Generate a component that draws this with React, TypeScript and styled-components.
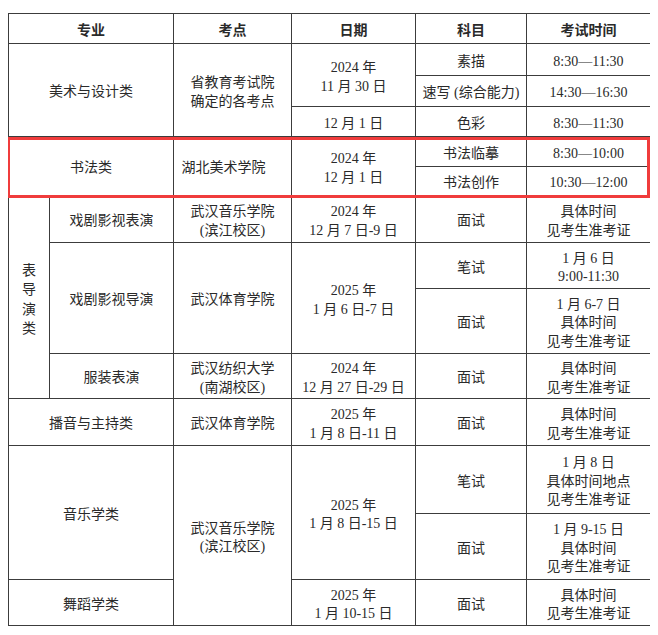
import styled, { createGlobalStyle } from 'styled-components';

const GlobalStyle = createGlobalStyle`
  body {
    margin: 8px;
    background: #ffffff;
    font-family: "Liberation Serif", "Noto Sans CJK SC", serif;
  }
`;

const Page = styled.div`
  padding-top: 5px;
`;

const Grid = styled.div`
  display: grid;
  width: 641px;
  grid-template-columns: 40px 123px 117px 123px 110px 123px;
  grid-template-rows: 29px 31px 30px 29px 29px 28px 46px 45px 64px 44px 46px 67px 65px 45px;
  gap: 1px;
  padding: 1px;
  background: #3c3c3c;
`;

const Cell = styled.div<{ $col: string; $row: string; $head?: boolean; $lean?: number }>`
  grid-column: ${(p) => p.$col};
  grid-row: ${(p) => p.$row};
  display: flex;
  flex-direction: column;
  align-items: center;
  justify-content: center;
  padding: 5px ${(p) => p.$lean ?? 0}px 0 0;
  text-align: center;
  background: #ffffff;
  color: #2a2a2a;
  font-size: 14px;
  line-height: 18.5px;
  font-weight: ${(p) => (p.$head ? 700 : 400)};
  white-space: nowrap;
`;

const Vertical = styled.span`
  width: 1em;
  white-space: normal;
  line-height: 19.5px;
`;

const Highlight = styled.div`
  grid-column: 1 / -1;
  grid-row: 5 / 7;
  margin: 0 0 -3px -2px;
  border: 3px solid #f03c3c;
  pointer-events: none;
`;

function App() {
  return (
    <Page>
      <GlobalStyle />
      <Grid>
        <Cell $col="1 / 3" $row="1" $head>专业</Cell>
        <Cell $col="3" $row="1" $head>考点</Cell>
        <Cell $col="4" $row="1" $head>日期</Cell>
        <Cell $col="5" $row="1" $head>科目</Cell>
        <Cell $col="6" $row="1" $head>考试时间</Cell>

        <Cell $col="1 / 3" $row="2 / 5">美术与设计类</Cell>
        <Cell $col="3" $row="2 / 5">
          <span>省教育考试院</span>
          <span>确定的各考点</span>
        </Cell>
        <Cell $col="4" $row="2 / 4">
          <span>2024 年</span>
          <span>11 月 30 日</span>
        </Cell>
        <Cell $col="4" $row="4">12 月 1 日</Cell>
        <Cell $col="5" $row="2">素描</Cell>
        <Cell $col="5" $row="3">速写 (综合能力)</Cell>
        <Cell $col="5" $row="4">色彩</Cell>
        <Cell $col="6" $row="2">8:30—11:30</Cell>
        <Cell $col="6" $row="3">14:30—16:30</Cell>
        <Cell $col="6" $row="4">8:30—11:30</Cell>

        <Cell $col="1 / 3" $row="5 / 7">书法类</Cell>
        <Cell $col="3" $row="5 / 7" $lean={18}>湖北美术学院</Cell>
        <Cell $col="4" $row="5 / 7">
          <span>2024 年</span>
          <span>12 月 1 日</span>
        </Cell>
        <Cell $col="5" $row="5">书法临摹</Cell>
        <Cell $col="5" $row="6">书法创作</Cell>
        <Cell $col="6" $row="5">8:30—10:00</Cell>
        <Cell $col="6" $row="6">10:30—12:00</Cell>

        <Cell $col="1" $row="7 / 11">
          <Vertical>表导演类</Vertical>
        </Cell>
        <Cell $col="2" $row="7">戏剧影视表演</Cell>
        <Cell $col="3" $row="7">
          <span>武汉音乐学院</span>
          <span>(滨江校区)</span>
        </Cell>
        <Cell $col="4" $row="7">
          <span>2024 年</span>
          <span>12 月 7 日-9 日</span>
        </Cell>
        <Cell $col="5" $row="7">面试</Cell>
        <Cell $col="6" $row="7">
          <span>具体时间</span>
          <span>见考生准考证</span>
        </Cell>

        <Cell $col="2" $row="8 / 10">戏剧影视导演</Cell>
        <Cell $col="3" $row="8 / 10">武汉体育学院</Cell>
        <Cell $col="4" $row="8 / 10">
          <span>2025 年</span>
          <span>1 月 6 日-7 日</span>
        </Cell>
        <Cell $col="5" $row="8">笔试</Cell>
        <Cell $col="6" $row="8">
          <span>1 月 6 日</span>
          <span>9:00-11:30</span>
        </Cell>
        <Cell $col="5" $row="9">面试</Cell>
        <Cell $col="6" $row="9">
          <span>1 月 6-7 日</span>
          <span>具体时间</span>
          <span>见考生准考证</span>
        </Cell>

        <Cell $col="2" $row="10">服装表演</Cell>
        <Cell $col="3" $row="10">
          <span>武汉纺织大学</span>
          <span>(南湖校区)</span>
        </Cell>
        <Cell $col="4" $row="10">
          <span>2024 年</span>
          <span>12 月 27 日-29 日</span>
        </Cell>
        <Cell $col="5" $row="10">面试</Cell>
        <Cell $col="6" $row="10">
          <span>具体时间</span>
          <span>见考生准考证</span>
        </Cell>

        <Cell $col="1 / 3" $row="11">播音与主持类</Cell>
        <Cell $col="3" $row="11">武汉体育学院</Cell>
        <Cell $col="4" $row="11">
          <span>2025 年</span>
          <span>1 月 8 日-11 日</span>
        </Cell>
        <Cell $col="5" $row="11">面试</Cell>
        <Cell $col="6" $row="11">
          <span>具体时间</span>
          <span>见考生准考证</span>
        </Cell>

        <Cell $col="1 / 3" $row="12 / 14">音乐学类</Cell>
        <Cell $col="3" $row="12 / 15">
          <span>武汉音乐学院</span>
          <span>(滨江校区)</span>
        </Cell>
        <Cell $col="4" $row="12 / 14">
          <span>2025 年</span>
          <span>1 月 8 日-15 日</span>
        </Cell>
        <Cell $col="5" $row="12">笔试</Cell>
        <Cell $col="6" $row="12">
          <span>1 月 8 日</span>
          <span>具体时间地点</span>
          <span>见考生准考证</span>
        </Cell>
        <Cell $col="5" $row="13">面试</Cell>
        <Cell $col="6" $row="13">
          <span>1 月 9-15 日</span>
          <span>具体时间</span>
          <span>见考生准考证</span>
        </Cell>

        <Cell $col="1 / 3" $row="14">舞蹈学类</Cell>
        <Cell $col="4" $row="14">
          <span>2025 年</span>
          <span>1 月 10-15 日</span>
        </Cell>
        <Cell $col="5" $row="14">面试</Cell>
        <Cell $col="6" $row="14">
          <span>具体时间</span>
          <span>见考生准考证</span>
        </Cell>

        <Highlight />
      </Grid>
    </Page>
  );
}

export default App;
